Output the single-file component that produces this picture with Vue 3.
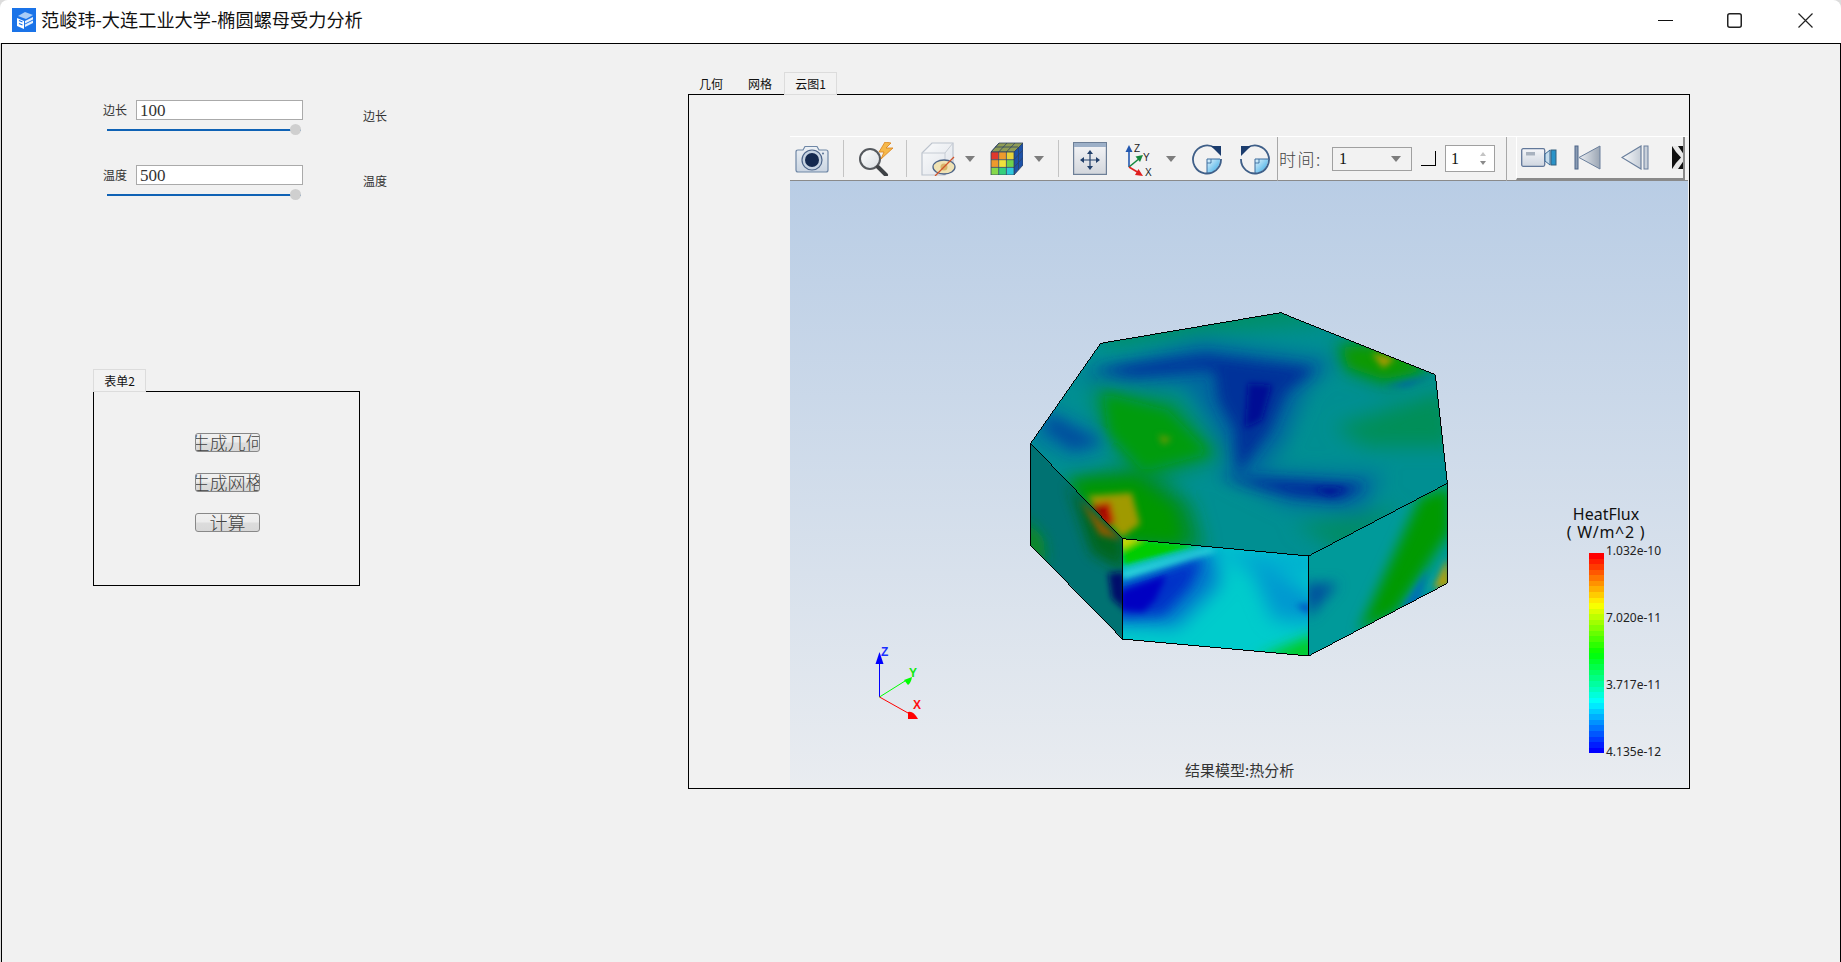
<script setup>
const params = [
  { label: '边长', value: '100' },
  { label: '温度', value: '500' }
]
const actions = ['生成几何', '生成网格', '计算']

// legend colour ramp, red on top down to blue
const ramp = [
  [255, 0, 0], [255, 255, 0], [0, 255, 0], [0, 255, 255], [0, 0, 255]
]
const bands = Array.from({ length: 36 }, (_, i) => {
  const t = (i / 35) * 4
  const k = Math.min(Math.floor(t), 3)
  const f = t - k
  const c = ramp[k].map((v, n) => Math.round(v + (ramp[k + 1][n] - v) * f))
  return `rgb(${c.join(',')})`
})
const legendLabels = ['1.032e-10', '7.020e-11', '3.717e-11', '4.135e-12']
</script>

<template>
  <div class="window">
    <header class="titlebar">
      <svg class="app-icon" width="24" height="24" viewBox="0 0 24 24">
        <rect width="24" height="24" fill="#1a73e8" />
        <path d="M6 8 L13 4 L21 7 L14 11 Z" fill="#a9cdf7" />
        <path d="M5 10 L12 13 L12 21 L5 18 Z" fill="#fff" />
        <path d="M13 13 L21 9 V11.5 L13 15.5 Z M13 16.5 L21 12.5 V15 L13 19 Z" fill="#e3effd" />
        <path d="M7 12.5 L10.5 14 M7 15.5 L10.5 17" stroke="#1a73e8" stroke-width="1.2" />
      </svg>
      <span class="title">范峻玮-大连工业大学-椭圆螺母受力分析</span>
      <div class="win-btns">
        <svg width="15" height="15" viewBox="0 0 15 15"><path d="M0 7.5 H15" stroke="#111" stroke-width="1" /></svg>
        <svg class="max-btn" width="15" height="15" viewBox="0 0 15 15"><rect x="0.75" y="0.75" width="13.5" height="13.5" rx="2" fill="none" stroke="#222" stroke-width="1.5" /></svg>
        <svg width="15" height="15" viewBox="0 0 15 15"><path d="M0.5 0.5 L14.5 14.5 M14.5 0.5 L0.5 14.5" stroke="#222" stroke-width="1.2" /></svg>
      </div>
    </header>

    <main class="client">
      <section class="side">
        <div v-for="p in params" :key="p.label" class="param">
          <span class="label">{{ p.label }}</span>
          <input class="num-input" :value="p.value" readonly />
          <span class="label echo">{{ p.label }}</span>
          <div class="slider">
            <div class="track"></div>
            <div class="thumb"></div>
          </div>
        </div>

        <div class="form2">
          <div class="small-tab">表单2</div>
          <div class="form-frame">
            <button v-for="a in actions" :key="a" class="action"><span>{{ a }}</span></button>
          </div>
        </div>
      </section>

      <section class="result">
        <div class="tab-row">
          <span class="tab">几何</span>
          <span class="tab second">网格</span>
          <span class="tab active">云图1</span>
        </div>
        <div class="panel">
          <div class="toolbar">
            <svg class="i-camera" width="34" height="28" viewBox="0 0 34 28">
              <defs>
                <linearGradient id="camBody" x1="0" y1="0" x2="0" y2="1">
                  <stop offset="0" stop-color="#eef2f6" /><stop offset="1" stop-color="#c9d4e1" />
                </linearGradient>
              </defs>
              <path d="M3 5 H8 L10 1.5 H22 L24 5 H31 Q33 5 33 7 V25 Q33 27 31 27 H3 Q1 27 1 25 V7 Q1 5 3 5 Z" fill="url(#camBody)" stroke="#6f87a6" stroke-width="1.2" />
              <circle cx="17" cy="15" r="10" fill="#c6d3e2" stroke="#4c6488" stroke-width="1.2" />
              <circle cx="17" cy="15" r="7" fill="#14294f" />
              <circle cx="28" cy="8.5" r="1" fill="#5b7496" />
            </svg>
            <i class="sep s-1"></i>
            <svg class="i-zoom" width="35" height="34" viewBox="0 0 35 34">
              <defs>
                <linearGradient id="lens" x1="0" y1="0" x2="1" y2="1">
                  <stop offset="0" stop-color="#fff" /><stop offset="1" stop-color="#d8dde2" />
                </linearGradient>
              </defs>
              <circle cx="12" cy="17" r="10" fill="url(#lens)" stroke="#55595e" stroke-width="2" />
              <path d="M20 25 L28 33" stroke="#3e4246" stroke-width="4" stroke-linecap="round" />
              <path d="M27 0 L33 1 L28 6 L35 6 L23 17 L26 10 L21 10 Z" fill="#f5b84a" stroke="#d9821a" stroke-width="0.8" />
            </svg>
            <i class="sep s-2"></i>
            <svg class="i-hide" width="35" height="34" viewBox="0 0 35 34">
              <defs>
                <linearGradient id="boxFace" x1="0" y1="0" x2="1" y2="1">
                  <stop offset="0" stop-color="#fafbfc" /><stop offset="1" stop-color="#dfe3e9" />
                </linearGradient>
              </defs>
              <path d="M1 11 L11 1 H32 V23 L24 33 H1 Z" fill="url(#boxFace)" stroke="#bcc3cd" stroke-width="1.2" />
              <path d="M1 11 H24 L32 1 M24 11 V33" fill="none" stroke="#c6ccd4" stroke-width="1" />
              <ellipse cx="23" cy="25" rx="11" ry="7" fill="#efe2b4" stroke="#4d6487" stroke-width="1.3" />
              <circle cx="23" cy="25" r="3.5" fill="#d8b56a" />
              <path d="M14 34 L33 15" stroke="#d0552c" stroke-width="1.3" />
            </svg>
            <i class="drop d-1"></i>
            <svg class="i-cube" width="33" height="33" viewBox="0 0 33 33">
              <path d="M1 10 L9 1 H33 L24 10 Z" fill="#8f9c55" stroke="#30435f" stroke-width="0.8" />
              <path d="M24 10 L33 1 V23 L24 33 Z" fill="#1d52a8" stroke="#30435f" stroke-width="0.8" />
              <rect x="1" y="10" width="7.7" height="7.7" fill="#e0382c" />
              <rect x="8.7" y="10" width="7.7" height="7.7" fill="#ee9a2c" />
              <rect x="16.4" y="10" width="7.6" height="7.7" fill="#e6d33a" />
              <rect x="1" y="17.7" width="7.7" height="7.7" fill="#ee9a2c" />
              <rect x="8.7" y="17.7" width="7.7" height="7.7" fill="#f0e23c" />
              <rect x="16.4" y="17.7" width="7.6" height="7.7" fill="#6fd24a" />
              <rect x="1" y="25.4" width="7.7" height="7.6" fill="#86d84a" />
              <rect x="8.7" y="25.4" width="7.7" height="7.6" fill="#36d07c" />
              <rect x="16.4" y="25.4" width="7.6" height="7.6" fill="#2fc8dc" />
              <path d="M1 10 H24 V33 H1 Z M8.7 10 V33 M16.4 10 V33 M1 17.7 H24 M1 25.4 H24 M9 1 L1 10 M17 1 L8.7 10 M25 1 L16.4 10 M28 5 H5 M28.5 5 V28 M33 8 L24 17.7 M33 15.5 L24 25.4" fill="none" stroke="#2f4463" stroke-width="0.8" />
            </svg>
            <i class="drop d-2"></i>
            <i class="sep s-3"></i>
            <svg class="i-move" width="34" height="33" viewBox="0 0 34 33">
              <defs>
                <linearGradient id="moveBg" x1="0" y1="0" x2="0" y2="1">
                  <stop offset="0" stop-color="#f6f6f8" /><stop offset="1" stop-color="#d2d6dc" />
                </linearGradient>
              </defs>
              <rect x="0.6" y="0.6" width="32.8" height="31.8" fill="url(#moveBg)" stroke="#6d7f97" stroke-width="1.2" />
              <rect x="1" y="1" width="32" height="4" fill="#9db0c8" />
              <path d="M17 10 V26 M9 18 H25" stroke="#22406b" stroke-width="1.2" />
              <path d="M17 8 L14 12 H20 Z M17 28 L14 24 H20 Z M7 18 L11 15 V21 Z M27 18 L23 15 V21 Z" fill="#22406b" />
            </svg>
            <svg class="i-axes" width="30" height="34" viewBox="0 0 30 34">
              <path d="M4 25 V8" stroke="#2358b0" stroke-width="1.6" />
              <path d="M4 3 L0.5 10 H7.5 Z" fill="#2358b0" />
              <path d="M4 25 L15 16" stroke="#16893e" stroke-width="1.6" />
              <path d="M18 13 L10.5 14.5 L15 20 Z" fill="#16893e" />
              <path d="M4 25 L14 31" stroke="#e02020" stroke-width="1.6" />
              <path d="M18 34 L10 33 L13.5 27 Z" fill="#e02020" />
              <text x="9" y="10" class="axis-letter">Z</text>
              <text x="18" y="19" class="axis-letter">Y</text>
              <text x="20" y="34" class="axis-letter">X</text>
            </svg>
            <i class="drop d-3"></i>
            <svg class="i-rot" width="32" height="32" viewBox="0 0 32 32">
              <defs>
                <linearGradient id="rotFill" x1="0" y1="0" x2="1" y2="1">
                  <stop offset="0" stop-color="#e6f5fc" /><stop offset="1" stop-color="#2ea6e6" />
                </linearGradient>
              </defs>
              <path d="M16 16 H29 A13.5 13.5 0 0 1 16 30 Z" fill="url(#rotFill)" />
              <path d="M16 20 H20 V16" fill="none" stroke="#2f5f94" stroke-width="0.8" />
              <path d="M16 16 H29 M16 16 V30" stroke="#3b6a9c" stroke-width="1" />
              <path d="M24 5 A14 14 0 1 0 30 16" fill="none" stroke="#3f5f88" stroke-width="1.8" />
              <path d="M30 13 L30 3 L20 3 Z" fill="#1c3d6e" />
            </svg>
            <svg class="i-rot2" width="32" height="32" viewBox="0 0 32 32">
              <defs>
                <linearGradient id="rotFill2" x1="0" y1="0" x2="1" y2="1">
                  <stop offset="0" stop-color="#e6f5fc" /><stop offset="1" stop-color="#2ea6e6" />
                </linearGradient>
              </defs>
              <path d="M16 16 H29 A13.5 13.5 0 0 1 16 30 Z" fill="url(#rotFill2)" />
              <path d="M16 20 H20 V16" fill="none" stroke="#2f5f94" stroke-width="0.8" />
              <path d="M16 16 H29 M16 16 V30" stroke="#3b6a9c" stroke-width="1" />
              <path d="M8 5 A14 14 0 1 1 2 16" fill="none" stroke="#3f5f88" stroke-width="1.8" />
              <path d="M2 13 L2 3 L12 3 Z" fill="#1c3d6e" />
            </svg>
            <i class="sep tall s-4"></i>
            <span class="time-label">时间:</span>
            <div class="combo"><span>1</span><i class="drop"></i></div>
            <i class="square"></i>
            <div class="spin">
              <span>1</span>
              <div class="spin-arrows"><i class="up"></i><i class="down"></i></div>
            </div>
            <i class="sep tall s-5"></i>
            <div class="toolbar2">
              <svg class="i-video" width="36" height="21" viewBox="0 0 36 21">
                <defs>
                  <linearGradient id="vidBody" x1="0" y1="0" x2="0" y2="1">
                    <stop offset="0" stop-color="#f5f6f9" /><stop offset="1" stop-color="#cfd6e0" />
                  </linearGradient>
                </defs>
                <rect x="0.7" y="1.7" width="23" height="17.6" rx="1.5" fill="url(#vidBody)" stroke="#62789a" stroke-width="1.3" />
                <rect x="5" y="5" width="9" height="3.5" fill="#a8b2bf" />
                <path d="M24 7 L29 3 V18 L24 14 Z" fill="#c5dcec" stroke="#3a6a96" stroke-width="1" />
                <rect x="30" y="3" width="5" height="15" fill="#2a93c8" stroke="#35607f" stroke-width="1" />
              </svg>
              <svg class="i-first" width="27" height="25" viewBox="0 0 27 25">
                <defs>
                  <linearGradient id="triG" x1="0" y1="0" x2="1" y2="0">
                    <stop offset="0" stop-color="#eceff3" /><stop offset="1" stop-color="#9aa5b3" />
                  </linearGradient>
                </defs>
                <rect x="1" y="1" width="3" height="23" fill="#8a9bb3" stroke="#4c6488" stroke-width="1" />
                <path d="M5 12.5 L26 1 V24 Z" fill="url(#triG)" stroke="#6a7f9c" stroke-width="1" />
              </svg>
              <svg class="i-prev" width="28" height="25" viewBox="0 0 28 25">
                <defs>
                  <linearGradient id="triH" x1="0" y1="0" x2="1" y2="0">
                    <stop offset="0" stop-color="#fafbfc" /><stop offset="1" stop-color="#c4ccd6" />
                  </linearGradient>
                </defs>
                <path d="M1 12.5 L20 1 V24 Z" fill="url(#triH)" stroke="#6a7f9c" stroke-width="1.2" />
                <rect x="23" y="1" width="4" height="23" fill="#c8d0da" stroke="#6a7f9c" stroke-width="1" />
              </svg>
              <svg class="i-clip" width="15" height="23" viewBox="0 0 15 23">
                <rect width="15" height="23" fill="#111" />
                <path d="M0 0 H6 L14 11.5 L6 23 H0 L4 17 L9 11.5 L4 6 Z" fill="#e8e8e8" />
                <path d="M0 7 L5 11.5 L0 16 Z" fill="#111" />
              </svg>
            </div>
          </div>

          <div class="viewport">
            <svg class="scene" viewBox="790 181 899 607" width="899" height="607">
              <defs>
                <filter id="wide" filterUnits="userSpaceOnUse" x="0" y="0" width="1440" height="1140">
                  <feGaussianBlur stdDeviation="28" />
                </filter>
                <filter id="soft" filterUnits="userSpaceOnUse" x="0" y="0" width="1440" height="1140">
                  <feGaussianBlur stdDeviation="19" />
                </filter>
                <filter id="softer" filterUnits="userSpaceOnUse" x="0" y="0" width="1440" height="1140">
                  <feGaussianBlur stdDeviation="9" />
                </filter>
                <clipPath id="topFace"><path d="M92 460 L302 160 L842 68 L1306 254 L1342 580 L926 798 L367 746 Z" /></clipPath>
                <clipPath id="leftFace"><path d="M92 460 L367 746 V1047 L92 766 Z" /></clipPath>
                <clipPath id="frontFace"><path d="M367 746 L926 798 V1098 L367 1047 Z" /></clipPath>
                <clipPath id="rightFace"><path d="M926 798 L1342 580 V880 L926 1098 Z" /></clipPath>
              </defs>

              <g transform="translate(1000 290) scale(0.33333)">
                <!-- top face: teal base, halo layer, then core colours -->
                <g clip-path="url(#topFace)">
                  <rect width="1440" height="1140" fill="#008f92" />
                  <g filter="url(#wide)">
                    <path d="M280 40 L860 20 L1000 100 L620 130 L320 170 Z" fill="#008f68" />
                    <path d="M1000 410 L1340 300 L1360 470 L1100 470 Z" fill="#008f58" />
                    <path d="M210 270 L600 150 L1010 210 L920 300 L850 470 L720 590 L640 420 L560 290 Z" fill="#00689f" />
                    <path d="M620 530 L1150 550 L1090 670 L860 650 Z" fill="#00709e" />
                    <path d="M270 280 L530 320 L680 500 L440 590 L300 440 Z" fill="#008f58" />
                    <path d="M110 340 L340 440 L240 510 L90 450 Z" fill="#0074a0" />
                    <path d="M190 560 L430 530 L570 640 L610 780 L380 770 Z" fill="#008c28" />
                    <path d="M880 700 L1200 650 L1040 800 Z" fill="#008c68" />
                    <path d="M1000 160 L1160 150 L1300 230 L1160 290 L1030 240 Z" fill="#008f40" />
                  </g>
                  <g filter="url(#soft)">
                    <path d="M270 240 L620 195 L950 235 L800 275 L610 240 L400 258 Z" fill="#00309c" />
                    <path d="M640 215 L940 240 L860 305 L810 420 L712 555 L705 420 L655 330 Z" fill="#00309a" />
                    <path d="M660 560 L1100 585 L1020 630 L880 618 Z" fill="#00289c" />
                    <path d="M310 310 L505 360 L630 490 L430 545 L325 430 Z" fill="#009c08" />
                    <path d="M150 375 L305 458 L215 478 L135 420 Z" fill="#00509e" />
                    <path d="M1025 172 L1155 172 L1290 240 L1150 268 L1045 232 Z" fill="#0a9a06" />
                    <path d="M205 578 L405 568 L520 655 L545 755 L370 750 Z" fill="#009800" />
                  </g>
                  <g filter="url(#softer)">
                    <path d="M745 280 L815 285 L785 390 L735 415 Z" fill="#000c94" />
                    <path d="M935 595 L1040 595 L990 616 Z" fill="#001494" />
                    <path d="M1115 190 L1185 205 L1150 235 Z" fill="#a89a00" />
                    <path d="M1150 290 L1305 255 L1220 290 Z" fill="#0064a6" />
                    <path d="M262 618 L395 608 L420 702 L365 742 Z" fill="#a09a00" />
                    <path d="M475 435 L515 445 L490 465 Z" fill="#6a9a00" />
                    <path d="M272 645 L330 635 L345 698 L312 712 Z" fill="#b81000" />
                    <path d="M280 655 L310 650 L315 685 Z" fill="#8a0a00" />
                  </g>
                </g>

                <g clip-path="url(#leftFace)">
                  <rect width="1440" height="1140" fill="#007272" />
                  <g filter="url(#soft)">
                    <path d="M70 680 L130 745 L140 820 L70 800 Z" fill="#0a8a20" />
                    <path d="M205 580 L290 670 L375 745 L370 840 L275 790 Z" fill="#00661a" />
                  </g>
                  <g filter="url(#softer)">
                    <path d="M240 630 L300 690 L365 750 L300 735 Z" fill="#8a5a00" />
                    <path d="M325 850 L375 845 L380 965 L335 925 Z" fill="#00106a" />
                  </g>
                </g>

                <g clip-path="url(#frontFace)">
                  <rect width="1440" height="1140" fill="#00cccc" />
                  <g filter="url(#wide)">
                    <path d="M330 870 L640 770 L660 880 L530 1010 L330 1000 Z" fill="#0078cc" />
                    <path d="M640 770 L960 780 L960 860 L720 840 Z" fill="#00b0d0" />
                    <path d="M740 800 L960 920 L960 1000 L820 990 Z" fill="#0098d0" />
                  </g>
                  <g filter="url(#soft)">
                    <path d="M350 885 L610 800 L570 890 L490 975 L350 985 Z" fill="#0030c8" />
                    <path d="M770 1105 L950 1125 L950 1030 Z" fill="#00cc28" />
                  </g>
                  <g filter="url(#softer)">
                    <path d="M360 905 L500 855 L465 930 L430 965 L360 960 Z" fill="#0006c2" />
                    <path d="M885 945 L930 940 L930 975 Z" fill="#0058c4" />
                    <path d="M355 735 L610 765 L370 830 Z" fill="#00cc00" />
                    <path d="M355 735 L430 742 L360 780 Z" fill="#d0d800" />
                    <path d="M360 846 L630 772 L650 782 L370 866 Z" fill="#30dcdc" />
                  </g>
                </g>

                <g clip-path="url(#rightFace)">
                  <rect width="1440" height="1140" fill="#009a9a" />
                  <g filter="url(#soft)">
                    <path d="M1350 590 L1260 620 L1075 1025 L1185 970 L1350 725 Z" fill="#009a00" />
                    <path d="M915 880 L1015 880 L925 985 Z" fill="#00509e" />
                  </g>
                  <g filter="url(#softer)">
                    <path d="M1205 955 L1285 835 L1255 950 Z" fill="#0070b4" />
                    <path d="M1342 805 L1350 890 L1300 895 Z" fill="#b0a010" />
                  </g>
                </g>

                <path class="edge" d="M92 460 L302 160 L842 68 L1306 254 L1342 580 V880 L926 1098 L367 1047 L92 766 Z M92 460 L367 746 L926 798 L1342 580 M367 746 V1047 M926 798 V1098" />
              </g>

              <!-- orientation triad -->
              <path d="M879.5 697 V660" stroke="#0000ff" stroke-width="1" />
              <path d="M879.5 697 L905 681" stroke="#00ff00" stroke-width="1" />
              <path d="M879.5 697 L908 713" stroke="#ff0000" stroke-width="1" />
              <path d="M879.5 652 L875.5 664 H883.5 Z" fill="#0000ff" />
              <path d="M912 677 L904 680 L908 685 Q911 683 912 677 Z" fill="#00ff00" />
              <path d="M918 719 L908 719 V712 Q913 710 918 719 Z" fill="#ff0000" />
              <text x="881" y="656" class="triad" fill="#1a2fff">Z</text>
              <text x="909" y="677" class="triad" fill="#10e810">Y</text>
              <text x="913" y="709" class="triad" fill="#ff1010">X</text>
            </svg>

            <div class="legend">
              <div class="legend-title">
                <div>HeatFlux</div>
                <div class="legend-unit">( W/m^2 )</div>
              </div>
              <div class="legend-body">
                <div class="legend-bar">
                  <i v-for="(c, i) in bands" :key="i" :style="{ background: c }"></i>
                </div>
                <div class="legend-ticks">
                  <span v-for="l in legendLabels" :key="l">{{ l }}</span>
                </div>
              </div>
            </div>
            <div class="caption">结果模型:热分析</div>
          </div>
        </div>
      </section>
    </main>
  </div>
</template>

<style scoped>
.window {
  width: 1841px;
  height: 962px;
  display: flex;
  flex-direction: column;
  font-family: "Noto Sans CJK SC", "Noto Sans", sans-serif;
  overflow: hidden;
  background: #dcdcdc;
  color: #222;
}

/* TITLE BAR */
.titlebar {
  height: 43px;
  flex-shrink: 0;
  display: flex;
  align-items: center;
  background: #fff;
  border-radius: 8px 8px 0 0;
  padding-left: 12px;
  box-sizing: border-box;
}
.app-icon { flex-shrink: 0; margin-top: -3px; }
.title { margin-left: 5px; font-size: 18.2px; color: #111; margin-top: -5px; white-space: nowrap; }
.win-btns {
  margin-left: auto;
  display: flex;
  align-items: center;
  gap: 55px;
  padding-right: 28px;
  margin-top: -3px;
}
.max-btn { margin: 0 1px 0 -1px; }

/* CLIENT AREA */
.client {
  flex: 1;
  display: flex;
  margin-left: 1px;
  background: #f1f1f1;
  border-top: 1px solid #000;
  border-left: 1px solid #000;
  border-right: 1px solid #000;
  min-height: 0;
}
.side { width: 686px; flex-shrink: 0; padding-top: 56px; box-sizing: border-box; }

.param {
  display: grid;
  grid-template-columns: 33px 167px auto;
  grid-template-rows: 20px 11px;
  row-gap: 4px;
  margin-left: 101px;
  margin-bottom: 30px;
  align-items: center;
}
.label { font-size: 12px; color: #333; line-height: 16px; white-space: nowrap; }
.echo { margin-left: 60px; align-self: start; margin-top: 8px; }
.num-input {
  width: 167px;
  height: 20px;
  box-sizing: border-box;
  border: 1px solid #aaa;
  background: #fff;
  padding: 2px 3px 0;
  font-family: "Liberation Serif", serif;
  font-size: 17px;
  color: #333;
  outline: none;
}
.slider {
  grid-column: 1 / 3;
  position: relative;
  margin-left: 4px;
  width: 194px;
  height: 11px;
  display: flex;
  align-items: center;
}
.track { width: 100%; height: 2px; background: #0f62b5; }
.thumb {
  position: absolute;
  right: 0;
  top: 0;
  width: 11px;
  height: 11px;
  border-radius: 50%;
  background: #cfcfcf;
}

.form2 { margin-left: 91px; margin-top: 169px; width: 267px; }
.small-tab {
  width: 53px;
  height: 23px;
  box-sizing: border-box;
  border: 1px solid #dcdcdc;
  background: #f2f2f2;
  font-size: 12px;
  color: #111;
  display: flex;
  align-items: center;
  justify-content: center;
  position: relative;
  z-index: 1;
}
.form-frame {
  margin-top: -1px;
  height: 195px;
  box-sizing: border-box;
  border: 1px solid #000;
  padding: 41px 0 0 2px;
  display: flex;
  flex-direction: column;
  align-items: center;
  gap: 21px;
}
.action {
  width: 65px;
  height: 19px;
  padding: 0;
  box-sizing: border-box;
  border: 1px solid #888;
  border-radius: 3px;
  background: linear-gradient(#f0f0f0 0, #ececec 48%, #dcdcdc 52%, #d8d8d8 100%);
  display: flex;
  align-items: center;
  justify-content: center;
  overflow: hidden;
  font-family: "Noto Sans CJK SC", sans-serif;
  font-weight: 300;
  font-size: 18px;
  color: #444;
}
.action span { flex-shrink: 0; white-space: nowrap; line-height: 17px; }

/* RESULT TABS */
.result { width: 1002px; padding-top: 28px; flex-shrink: 0; box-sizing: border-box; }
.tab-row { height: 22px; display: flex; font-size: 12px; color: #111; position: relative; z-index: 1; }
.tab { display: flex; align-items: center; margin-left: 11px; line-height: 16px; margin-top: 2px; }
.tab.second { margin-left: 25px; }
.tab.active {
  margin-left: 12px;
  margin-top: 0;
  width: 53px;
  height: 23px;
  box-sizing: border-box;
  border: 1px solid #dcdcdc;
  background: #f2f2f2;
  justify-content: center;
}
.panel {
  height: 695px;
  box-sizing: border-box;
  border: 1px solid #000;
  padding: 41px 1px 0 101px;
  display: flex;
  flex-direction: column;
}

/* TOOLBAR */
.toolbar {
  height: 45px;
  flex-shrink: 0;
  display: flex;
  align-items: center;
  position: relative;
  background: #f2f2f2;
  border-top: 1px solid #fff;
  border-bottom: 1px solid #8a8a8a;
  box-sizing: border-box;
}
.sep { width: 1px; height: 37px; background: #c4c4c4; flex-shrink: 0; }
.sep.tall { height: 44px; background: #a8a8a8; }
.drop {
  width: 0;
  height: 0;
  border-left: 5px solid transparent;
  border-right: 5px solid transparent;
  border-top: 6px solid #7d7d7d;
  flex-shrink: 0;
}
.axis-letter { font-family: "Liberation Sans", sans-serif; font-size: 10px; fill: #222; }
.i-camera { margin-left: 5px; flex-shrink: 0; }
.s-1 { margin-left: 14px; }
.i-zoom { margin-left: 14px; flex-shrink: 0; }
.s-2 { margin-left: 13px; }
.i-hide { margin-left: 14px; flex-shrink: 0; }
.d-1 { margin-left: 9px; }
.i-cube { margin-left: 15px; flex-shrink: 0; }
.d-2 { margin-left: 11px; }
.s-3 { margin-left: 14px; }
.i-move { margin-left: 14px; flex-shrink: 0; }
.i-axes { margin-left: 18px; flex-shrink: 0; }
.d-3 { margin-left: 11px; }
.i-rot { margin-left: 15px; flex-shrink: 0; }
.i-rot2 { margin-left: 16px; flex-shrink: 0; }
.s-4 { margin-left: 6px; }
.time-label {
  margin-left: 1px;
  width: 42px;
  font-size: 17px;
  letter-spacing: 1.5px;
  font-weight: 300;
  color: #444;
  white-space: nowrap;
}
.combo {
  margin-left: 11px;
  width: 80px;
  height: 24px;
  box-sizing: border-box;
  border: 1px solid #a0a0a0;
  display: flex;
  align-items: center;
  justify-content: space-between;
  padding: 0 10px 0 6px;
  font-family: "Liberation Serif", serif;
  font-size: 16px;
  color: #111;
}
.square {
  margin-left: 9px;
  width: 15px;
  height: 15px;
  box-sizing: border-box;
  border-right: 1px solid #000;
  border-bottom: 1px solid #000;
  flex-shrink: 0;
}
.spin {
  margin-left: 9px;
  width: 50px;
  height: 27px;
  box-sizing: border-box;
  border: 1px solid #a0a0a0;
  background: #fff;
  display: flex;
  align-items: center;
  justify-content: space-between;
  padding: 0 8px 0 5px;
  font-family: "Liberation Serif", serif;
  font-size: 16px;
  color: #111;
}
.spin-arrows { display: flex; flex-direction: column; gap: 5px; }
.spin-arrows i { width: 0; height: 0; border-left: 3px solid transparent; border-right: 3px solid transparent; }
.spin-arrows .up { border-bottom: 4px solid #c4c4c4; }
.spin-arrows .down { border-top: 4px solid #8a8a8a; }
.s-5 { margin-left: 11px; }
.toolbar2 {
  margin-left: 9px;
  width: 169px;
  height: 43px;
  align-self: flex-start;
  box-sizing: border-box;
  border-right: 2px solid #8a8a8a;
  border-bottom: 2px solid #8a8a8a;
  border-left: 1px solid #fff;
  display: flex;
  align-items: center;
  overflow: hidden;
  flex-shrink: 0;
}
.i-video { margin-left: 4px; flex-shrink: 0; }
.i-first { margin-left: 17px; flex-shrink: 0; }
.i-prev { margin-left: 20px; flex-shrink: 0; }
.i-clip { margin-left: 23px; flex-shrink: 0; }

/* 3D VIEW */
.viewport {
  flex: 1;
  position: relative;
  overflow: hidden;
  background: linear-gradient(#b9cde5 0%, #e9ecf0 100%);
}
.scene { display: block; }
.edge { fill: none; stroke: #000; stroke-width: 3; stroke-linejoin: miter; shape-rendering: crispEdges; }
.triad { font-family: "Liberation Sans", sans-serif; font-size: 12px; font-weight: 700; }

.legend { position: absolute; left: 765px; top: 324px; width: 133px; }
.legend-title {
  width: 80px;
  margin-left: 11px;
  font-family: "Noto Sans", sans-serif;
  font-size: 16px;
  line-height: 18px;
  color: #111;
  text-align: center;
  white-space: nowrap;
}
.legend-unit { letter-spacing: 0.7px; }
.legend-body { display: flex; margin-left: 34px; margin-top: 12px; }
.legend-bar { width: 15px; height: 200px; display: flex; flex-direction: column; }
.legend-bar i { flex: 1; }
.legend-ticks {
  margin-left: 2px;
  margin-top: -10px;
  height: 217px;
  display: flex;
  flex-direction: column;
  justify-content: space-between;
  font-family: "Noto Sans", sans-serif;
  font-size: 12px;
  line-height: 16px;
  color: #222;
}
.caption {
  position: absolute;
  left: 395px;
  top: 579px;
  font-size: 15px;
  line-height: 20px;
  color: #333;
  white-space: nowrap;
}
</style>

<style>
html, body { margin: 0; background: #dcdcdc; }
</style>
